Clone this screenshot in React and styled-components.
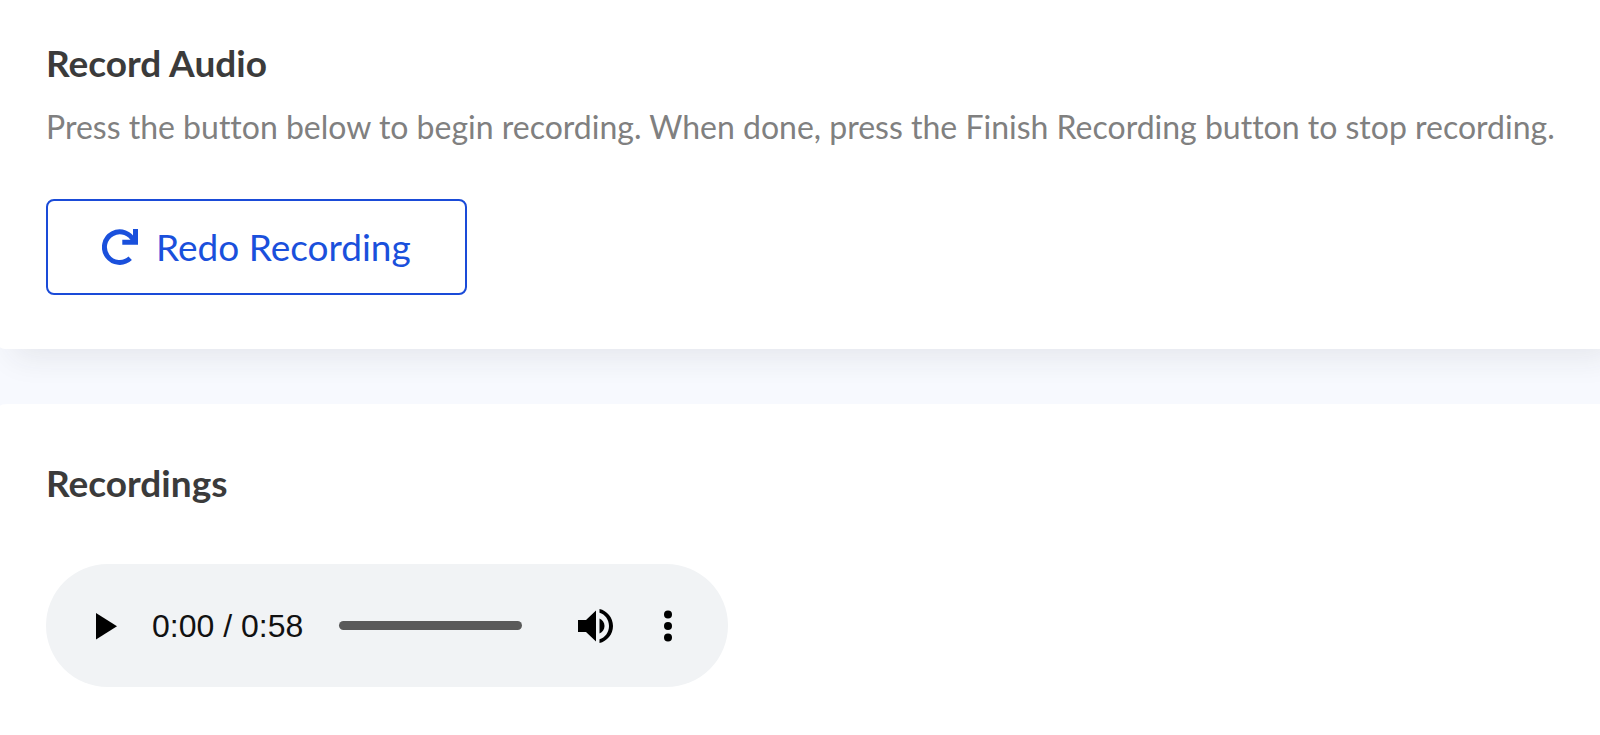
import React from "react";
import styled, { createGlobalStyle } from "styled-components";

const GlobalStyle = createGlobalStyle`
  *, *::before, *::after { box-sizing: border-box; }
  body {
    margin: 0;
    overflow-x: hidden;
    background: #f7f9fe;
    font-family: Lato, "Liberation Sans", sans-serif;
    font-variant-ligatures: none;
  }
`;

const Page = styled.main`
  display: flex;
  flex-direction: column;
  gap: 55px;
  min-height: 100vh;
`;

const Card = styled.section`
  display: flex;
  flex-direction: column;
  align-items: flex-start;
  padding: ${({ $last }) => ($last ? "55px 24px 48px 46px" : "39px 24px 54px 46px")};
  flex-grow: ${({ $last }) => ($last ? 1 : 0)};
  background: #fff;
  border-radius: ${({ $last }) =>
    $last ? "8px 0 0 0 / 2px 0 0 0" : "0 0 0 8px / 0 0 0 2px"};
  box-shadow: ${({ $last }) =>
    $last ? "none" : "12px 8px 32px rgba(40, 40, 60, 0.09)"};
`;

const Title = styled.h2`
  margin: 0;
  color: #3b3b3b;
  font-size: 37px;
  font-weight: 700;
  line-height: 48px;
`;

const Hint = styled.p`
  margin: 16px 0 0;
  color: #808080;
  font-size: 32px;
  line-height: 48px;
`;

const OutlineButton = styled.button`
  display: inline-flex;
  align-items: center;
  gap: 18px;
  height: 96px;
  margin-top: 48px;
  padding: 0 54px;
  border: 2px solid #1a4bd8;
  border-radius: 8px;
  background: #fff;
  color: #1a50dc;
  font-family: inherit;
  font-size: 37px;
  line-height: 48px;
  white-space: nowrap;
  cursor: pointer;
`;

const Player = styled.div`
  display: flex;
  align-items: center;
  width: 682px;
  max-width: 100%;
  height: 123px;
  margin-top: 57px;
  padding: 0 40px;
  border-radius: 62px;
  background: #f1f3f5;
`;

const IconButton = styled.button`
  display: flex;
  align-items: center;
  justify-content: center;
  flex: none;
  width: 40px;
  height: 40px;
  padding: 0;
  border: 0;
  background: none;
  color: #000;
  cursor: pointer;
`;

const Time = styled.span`
  flex: none;
  margin: 0 36px 0 26px;
  color: #111;
  font-family: "Liberation Sans", sans-serif;
  font-size: 32px;
  line-height: 40px;
  white-space: nowrap;
`;

const Seek = styled.input`
  appearance: none;
  flex: 1;
  min-width: 0;
  height: 9px;
  margin: 0 54px 0 0;
  border-radius: 5px;
  background: #5a5a5a;
  cursor: pointer;

  &::-webkit-slider-thumb {
    appearance: none;
    width: 1px;
    height: 1px;
    background: transparent;
  }
`;

const Actions = styled.div`
  display: flex;
  flex: none;
  gap: 32px;
`;

const RedoIcon = () => (
  <svg width="36" height="36" viewBox="0 0 36 36" fill="none" stroke="currentColor" strokeWidth="5" aria-hidden="true">
    <path d="M28.2 29.3A15.3 15.3 0 1 1 32 12.6" />
    <path d="M33.5 0V13.3H20.3" />
  </svg>
);

const PlayIcon = () => (
  <svg width="22" height="28" viewBox="0 0 22 28" fill="currentColor" aria-hidden="true">
    <path d="M1 1V27.5L22 14.2Z" />
  </svg>
);

const VolumeIcon = () => (
  <svg width="36" height="34" viewBox="0 0 36 34" fill="currentColor" aria-hidden="true">
    <path d="M0 11V23H8L18 32.500V1.500L8 11Z" />
    <path d="M21.500 9.500C24.500 10.800 26.500 13.500 26.500 17S24.500 23.200 21.500 24.500Z" />
    <path d="M21.500 0V3.700C27 5.300 31 10.600 31 17S27 28.700 21.500 30.300V34C29 32.300 35 25.500 35 17S29 1.700 21.500 0Z" />
  </svg>
);

const MoreIcon = () => (
  <svg width="8" height="32" viewBox="0 0 8 32" fill="currentColor" aria-hidden="true">
    <circle cx="4" cy="4.500" r="4" />
    <circle cx="4" cy="16" r="4" />
    <circle cx="4" cy="27.500" r="4" />
  </svg>
);

export default function App() {
  return (
    <>
      <GlobalStyle />
      <Page>
        <Card>
          <Title>Record Audio</Title>
          <Hint>
            Press the button below to begin recording. When done, press the
            Finish Recording button to stop recording.
          </Hint>
          <OutlineButton type="button">
            <RedoIcon />
            Redo Recording
          </OutlineButton>
        </Card>
        <Card $last>
          <Title>Recordings</Title>
          <Player role="group" aria-label="Audio player">
            <IconButton type="button" aria-label="Play">
              <PlayIcon />
            </IconButton>
            <Time>0:00 / 0:58</Time>
            <Seek type="range" min="0" max="58" defaultValue="0" aria-label="Seek" />
            <Actions>
              <IconButton type="button" aria-label="Mute">
                <VolumeIcon />
              </IconButton>
              <IconButton type="button" aria-label="More options">
                <MoreIcon />
              </IconButton>
            </Actions>
          </Player>
        </Card>
      </Page>
    </>
  );
}
